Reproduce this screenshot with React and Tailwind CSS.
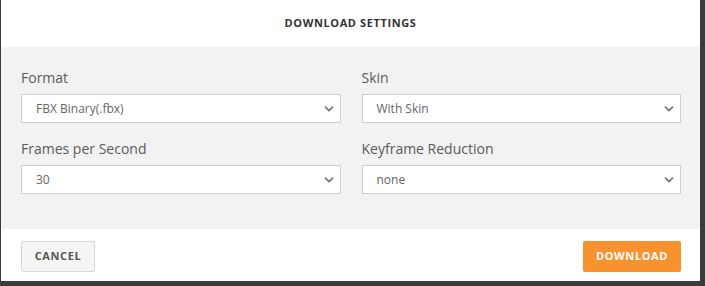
import React from 'react';

const Chevron = () => (
  <svg width="10" height="6" viewBox="0 0 10 6" fill="none" className="shrink-0">
    <path d="M1.5 1.2l3.5 3.5 3.5-3.5" stroke="#7a7a7a" strokeWidth="1.8" strokeLinecap="round" strokeLinejoin="round" />
  </svg>
);

const Field = ({ label, value }) => (
  <div className="flex flex-col">
    <label className="text-[14px] leading-[20px] text-[#5a5a5a] mb-[6px]">{label}</label>
    <div className="h-[29px] bg-white border border-[#cfcfcf] flex items-center justify-between pl-[14px] pr-[6px]">
      <span className="text-[12px] text-[#666]">{value}</span>
      <Chevron />
    </div>
  </div>
);

const App = () => {
  const fields = [
    { label: 'Format', value: 'FBX Binary(.fbx)' },
    { label: 'Skin', value: 'With Skin' },
    { label: 'Frames per Second', value: '30' },
    { label: 'Keyframe Reduction', value: 'none' },
  ];

  return (
    <div className="w-[705px] h-[286px] bg-[#3b3b3b] overflow-hidden" style={{ fontFamily: '"Open Sans", "Noto Sans", sans-serif' }}>
      <div className="ml-px w-[699px] h-[281px] bg-white flex flex-col">
        <div className="h-[47px] flex items-center justify-center">
          <h2 className="text-[11px] font-bold tracking-[0.6px] text-[#333]">DOWNLOAD SETTINGS</h2>
        </div>
        <div className="h-[182px] bg-[#f2f2f2] pl-[20px] pr-[19px] pt-[21px]">
          <div className="grid grid-cols-2 gap-x-[21px] gap-y-[16px]">
            {fields.map((f) => (
              <Field key={f.label} label={f.label} value={f.value} />
            ))}
          </div>
        </div>
        <div className="flex-1 flex items-center justify-between pl-[20px] pr-[19px] pt-[2px]">
          <button className="h-[31px] w-[74px] border border-[#d9d9d9] bg-[#f5f5f5] rounded-[2px] text-[11px] font-bold tracking-[0.6px] text-[#555]">
            CANCEL
          </button>
          <button className="h-[31px] w-[98px] bg-[#f7922f] rounded-[2px] text-[11px] font-bold tracking-[0.6px] text-white">
            DOWNLOAD
          </button>
        </div>
      </div>
    </div>
  );
};

export default App;
